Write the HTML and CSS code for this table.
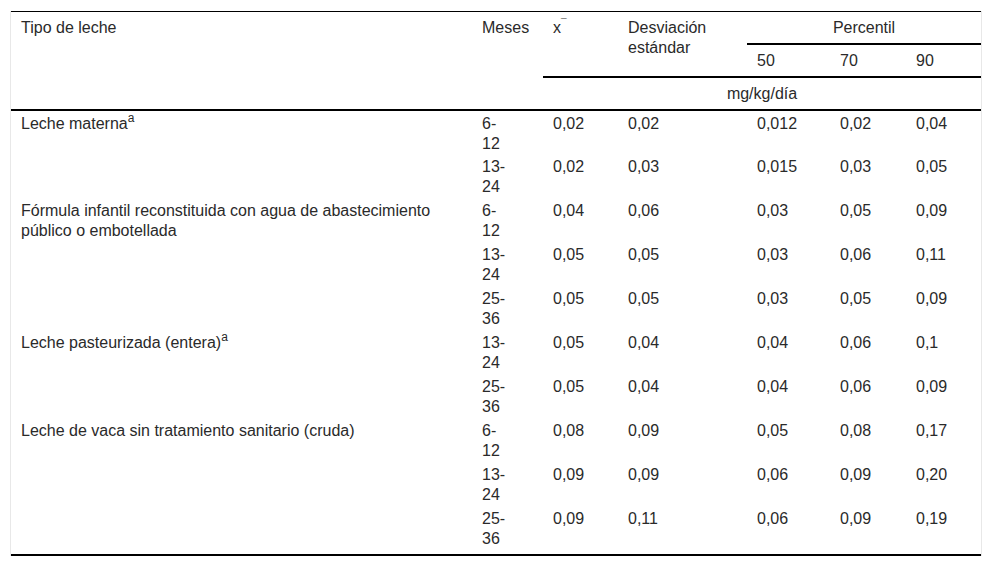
FILE: index.html
```html
<!DOCTYPE html>
<html lang="es">
<head>
<meta charset="utf-8">
<title>Tabla</title>
<link rel="stylesheet" href="styles.css">
</head>
<body>
<div class="wrap">
<table class="tbl">
<colgroup>
<col class="c1"><col class="c2"><col class="c3"><col class="c4"><col class="c5"><col class="c6"><col class="c7">
</colgroup>
<thead>
<tr>
<th rowspan="3">Tipo de leche</th>
<th rowspan="3">Meses</th>
<th rowspan="2" class="bb">x<sup class="bar">¯</sup></th>
<th rowspan="2" class="bb">Desviación estándar</th>
<th colspan="3" class="center bb">Percentil</th>
</tr>
<tr>
<th class="bb">50</th>
<th class="bb">70</th>
<th class="bb">90</th>
</tr>
<tr>
<th colspan="5" class="center">mg/kg/día</th>
</tr>
</thead>
<tbody>
<tr><td>Leche materna<sup>a</sup></td><td>6-<br>12</td><td>0,02</td><td>0,02</td><td>0,012</td><td>0,02</td><td>0,04</td></tr>
<tr><td></td><td>13-<br>24</td><td>0,02</td><td>0,03</td><td>0,015</td><td>0,03</td><td>0,05</td></tr>
<tr><td>Fórmula infantil reconstituida con agua de abastecimiento público o embotellada</td><td>6-<br>12</td><td>0,04</td><td>0,06</td><td>0,03</td><td>0,05</td><td>0,09</td></tr>
<tr><td></td><td>13-<br>24</td><td>0,05</td><td>0,05</td><td>0,03</td><td>0,06</td><td>0,11</td></tr>
<tr><td></td><td>25-<br>36</td><td>0,05</td><td>0,05</td><td>0,03</td><td>0,05</td><td>0,09</td></tr>
<tr><td>Leche pasteurizada (entera)<sup>a</sup></td><td>13-<br>24</td><td>0,05</td><td>0,04</td><td>0,04</td><td>0,06</td><td>0,1</td></tr>
<tr><td></td><td>25-<br>36</td><td>0,05</td><td>0,04</td><td>0,04</td><td>0,06</td><td>0,09</td></tr>
<tr><td>Leche de vaca sin tratamiento sanitario (cruda)</td><td>6-<br>12</td><td>0,08</td><td>0,09</td><td>0,05</td><td>0,08</td><td>0,17</td></tr>
<tr><td></td><td>13-<br>24</td><td>0,09</td><td>0,09</td><td>0,06</td><td>0,09</td><td>0,20</td></tr>
<tr><td></td><td>25-<br>36</td><td>0,09</td><td>0,11</td><td>0,06</td><td>0,09</td><td>0,19</td></tr>
</tbody>
</table>
</div>
</body>
</html>
```
FILE: styles.css
```css
html, body {
  margin: 0;
  padding: 0;
  background: #fff;
}
body {
  font-family: "Liberation Sans", Arial, sans-serif;
  font-size: 16px;
  color: #2a2a2a;
}
.wrap {
  margin: 11px 10px 0;
  border-left: 1px solid #e8e8e8;
  border-right: 1px solid #e8e8e8;
}
.tbl {
  width: 100%;
  border-collapse: collapse;
  table-layout: fixed;
  border-top: 1px solid #000;
  border-bottom: 2px solid #000;
}
.c1 { width: 461px; }
.c2 { width: 71px; }
.c3 { width: 75px; }
.c4 { width: 129px; }
.c5 { width: 83px; }
.c6 { width: 76px; }
.c7 { width: 75px; }
.tbl th {
  font-weight: normal;
  text-align: left;
  vertical-align: top;
  line-height: 20px;
  padding: 6px 10px 5px;
}
.tbl thead {
  border-bottom: 2px solid #000;
}
.tbl th.bb {
  border-bottom: 2px solid #000;
}
.tbl th.center {
  text-align: center;
}
.tbl td {
  vertical-align: top;
  line-height: 20px;
  padding: 3px 10px 1px;
}
.tbl tbody tr:first-child td {
  padding-bottom: 0;
}
.tbl tbody tr:last-child td {
  padding-bottom: 5px;
}
sup {
  font-size: 12px;
  line-height: 0;
  vertical-align: 7px;
}
sup.bar {
  font-size: 10px;
  vertical-align: 6px;
}
```
